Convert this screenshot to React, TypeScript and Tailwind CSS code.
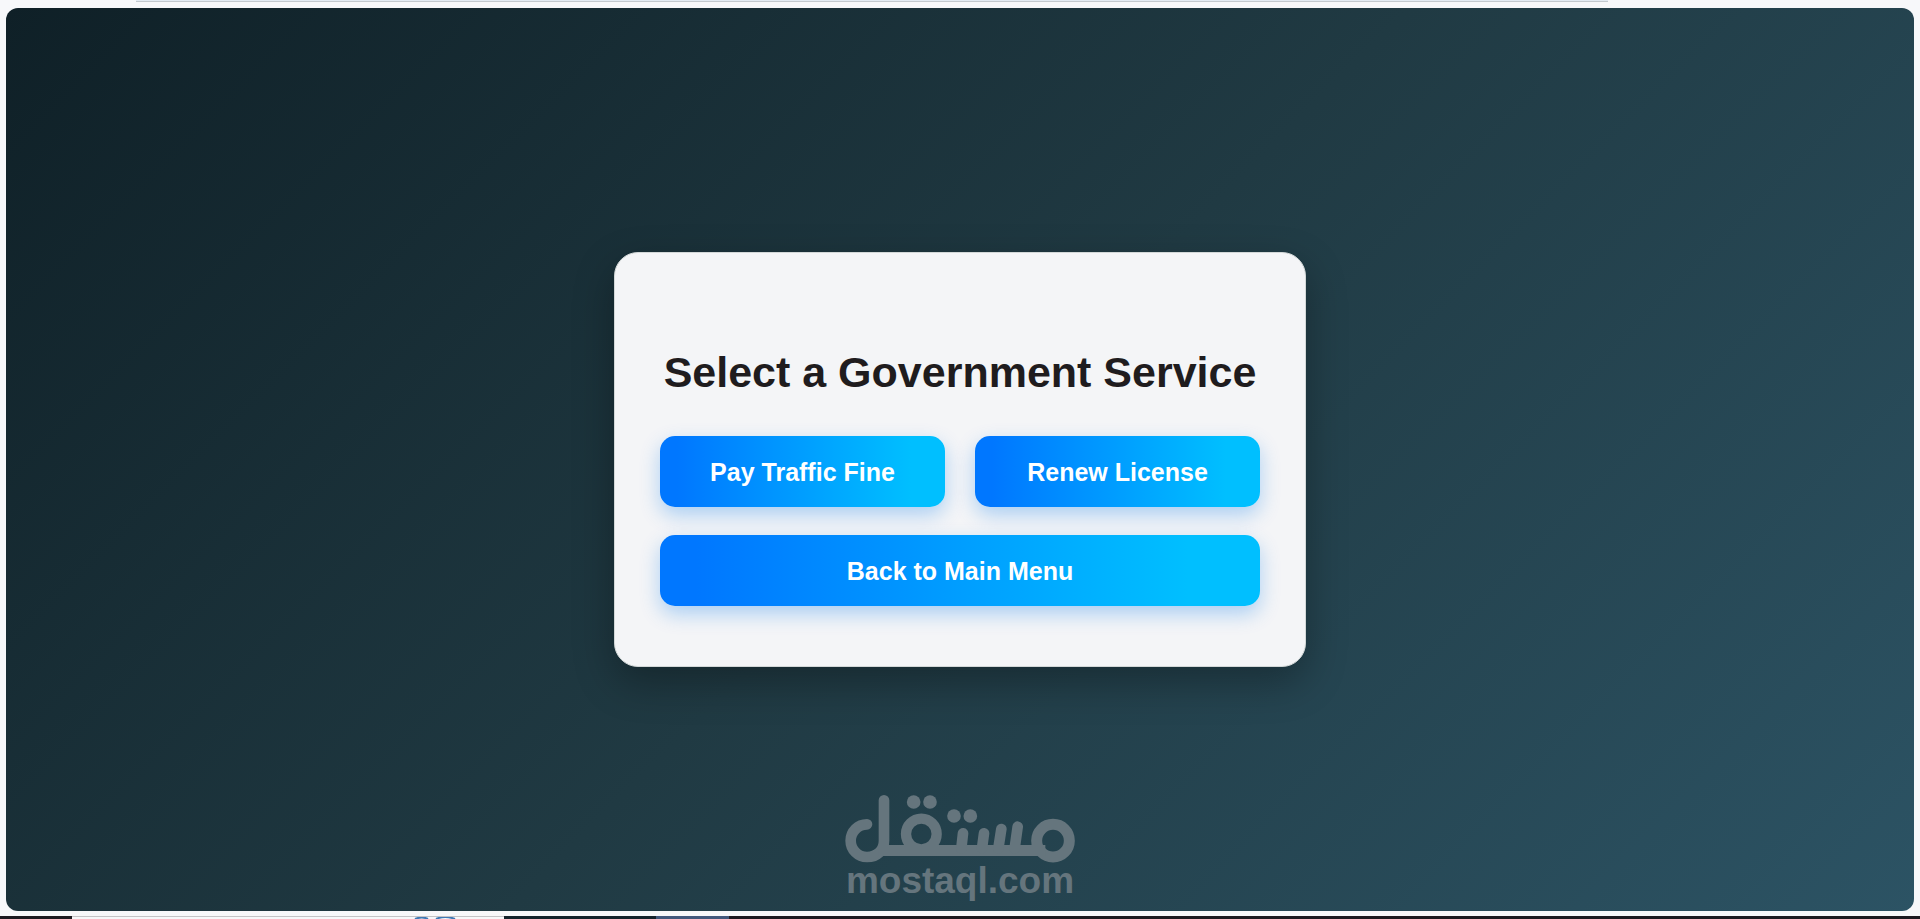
import type { ReactNode } from "react";

function ServiceButton({ children, wide = false }: { children: ReactNode; wide?: boolean }) {
  return (
    <button
      type="button"
      className={`h-[71px] rounded-[15px] bg-[linear-gradient(to_right,#0077ff_6%,#00bfff_88%)] pt-0.5 text-[25px] font-bold text-white shadow-[0_8px_20px_rgba(0,119,235,0.3)] ${wide ? "col-span-2" : ""}`}
    >
      {children}
    </button>
  );
}

function Logo() {
  return (
    <div className="absolute inset-x-0 bottom-[13px] flex flex-col items-center text-[#65757d]">
      <svg
        width="230"
        height="68"
        viewBox="75 45 690 204"
        fill="none"
        stroke="currentColor"
        strokeLinecap="round"
        role="img"
        aria-label="مستقل"
      >
        <circle cx="699" cy="182" r="49" strokeWidth="33" />
        <circle cx="304" cy="162" r="46" strokeWidth="31" />
        <path d="M141 133A49 49 0 0 0 141 231C172 231 192 210 192 182V61" strokeWidth="32" />
        <path d="M176 211.500H676" strokeWidth="33" strokeLinecap="butt" />
        <path d="M429 160L424 205M492 160L486 205M544 147L535 205M593 140L584 205" strokeWidth="32" />
        <g fill="currentColor" stroke="none">
          <circle cx="281" cy="66" r="20.500" />
          <circle cx="330" cy="66" r="20.500" />
          <circle cx="402" cy="108" r="20.500" />
          <circle cx="451" cy="108" r="20.500" />
        </g>
      </svg>
      <p className="text-[37px] leading-[35px] font-bold">mostaql.com</p>
    </div>
  );
}

function Taskbar() {
  return (
    <footer className="flex h-[3px] overflow-hidden bg-[#1c1a20]">
      <div className="w-[72px]" />
      <div className="flex w-[432px] justify-end border-t border-[#c4c4c6] bg-[#f7f8fa] pr-12">
        <svg width="42" height="2" viewBox="0 0 42 2" fill="none" stroke="#3f78b4" strokeWidth="2" aria-hidden="true">
          <path d="M1 2Q8 -1 14 2M22 2Q31 -2 41 2" />
        </svg>
      </div>
      <div className="w-[152px] bg-[#14232b]" />
      <div className="w-[73px] bg-[#42587c]" />
    </footer>
  );
}

export default function App() {
  return (
    <div className="flex min-h-screen flex-col bg-[#f7f8fa] font-['Liberation_Sans',Arial,sans-serif]">
      <header className="h-2 px-[136px]">
        <div className="mr-[176px] h-[2px] border-b border-[#c3c9ce] bg-[#e3ebf3]" />
      </header>
      <main className="relative mx-1.5 mb-[5px] flex flex-1 items-center justify-center rounded-xl bg-[linear-gradient(135deg,#0f2027,#203a43,#2c5364)]">
        <section className="rounded-3xl border border-[#d3d8d8] bg-[#f4f5f7] px-[45px] pt-[94px] pb-[60px] shadow-[0_15px_40px_rgba(0,0,0,0.3)]">
          <h1 className="mb-[39px] text-center text-[43px] leading-[50px] font-bold whitespace-nowrap text-[#1f1c1e]">
            Select a Government Service
          </h1>
          <div className="grid w-[600px] grid-cols-2 gap-x-[30px] gap-y-7">
            <ServiceButton>Pay Traffic Fine</ServiceButton>
            <ServiceButton>Renew License</ServiceButton>
            <ServiceButton wide>Back to Main Menu</ServiceButton>
          </div>
        </section>
        <Logo />
      </main>
      <Taskbar />
    </div>
  );
}
